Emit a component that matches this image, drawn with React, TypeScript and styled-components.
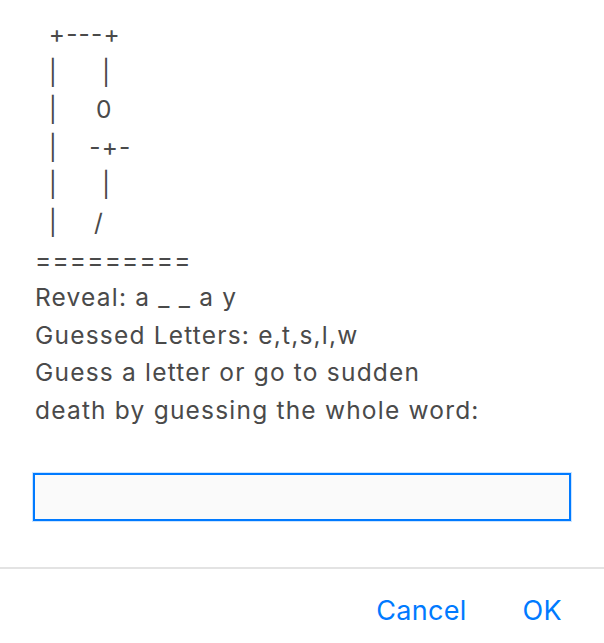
import React from "react";
import styled, { createGlobalStyle } from "styled-components";

const Global = createGlobalStyle`
  html, body { margin: 0; padding: 0; background: #ffffff; }
  body { font-family: Inter, "Liberation Sans", sans-serif; }
`;

const Dialog = styled.div`
  width: 604px;
  height: 643px;
  display: flex;
  flex-direction: column;
  background: #ffffff;
`;

const Body = styled.div`
  padding: 16px 34px 0 35px;
  display: flex;
  flex-direction: column;
`;

const Message = styled.div`
  font-size: 24.5px;
  letter-spacing: 1.2px;
  line-height: 37.6px;
  color: #4a4a4a;
  white-space: pre;
`;

const Field = styled.input`
  box-sizing: border-box;
  margin: 43px 0 0 -2px;
  width: 538px;
  height: 48px;
  border: 2px solid #007aff;
  box-shadow: 0 0 0 1px rgba(0, 122, 255, 0.2);
  background: #fafafa;
  outline: none;
  font-size: 22px;
  font-family: inherit;
  padding: 0 10px;
`;

const Divider = styled.div`
  margin-top: 46px;
  height: 2px;
  background: #e3e3e3;
`;

const Actions = styled.div`
  display: flex;
  justify-content: flex-end;
  gap: 56px;
  padding: 26px 42px 0 0;
`;

const ActionButton = styled.button`
  border: none;
  background: none;
  padding: 0;
  font-family: inherit;
  font-size: 27px;
  letter-spacing: 0.3px;
  line-height: 32px;
  color: #007aff;
  cursor: pointer;
`;

const art = [
  " \u2009+---+",
  " \u2009|     \u200A|",
  " \u2009|    \u20090",
  " \u2009|   \u200A\u200A-+-",
  " \u2009|     \u200A|",
  " \u2009|    \u200A/",
  "=========",
];

const info = [
  "Reveal: a _ _ a y",
  "Guessed Letters: e,t,s,l,w",
  "Guess a letter or go to sudden",
  "death by guessing the whole word:",
];

export default function App() {
  return (
    <Dialog>
      <Global />
      <Body>
        <Message>{[...art, ...info].join("\n")}</Message>
        <Field type="text" />
      </Body>
      <Divider />
      <Actions>
        <ActionButton>Cancel</ActionButton>
        <ActionButton>OK</ActionButton>
      </Actions>
    </Dialog>
  );
}
